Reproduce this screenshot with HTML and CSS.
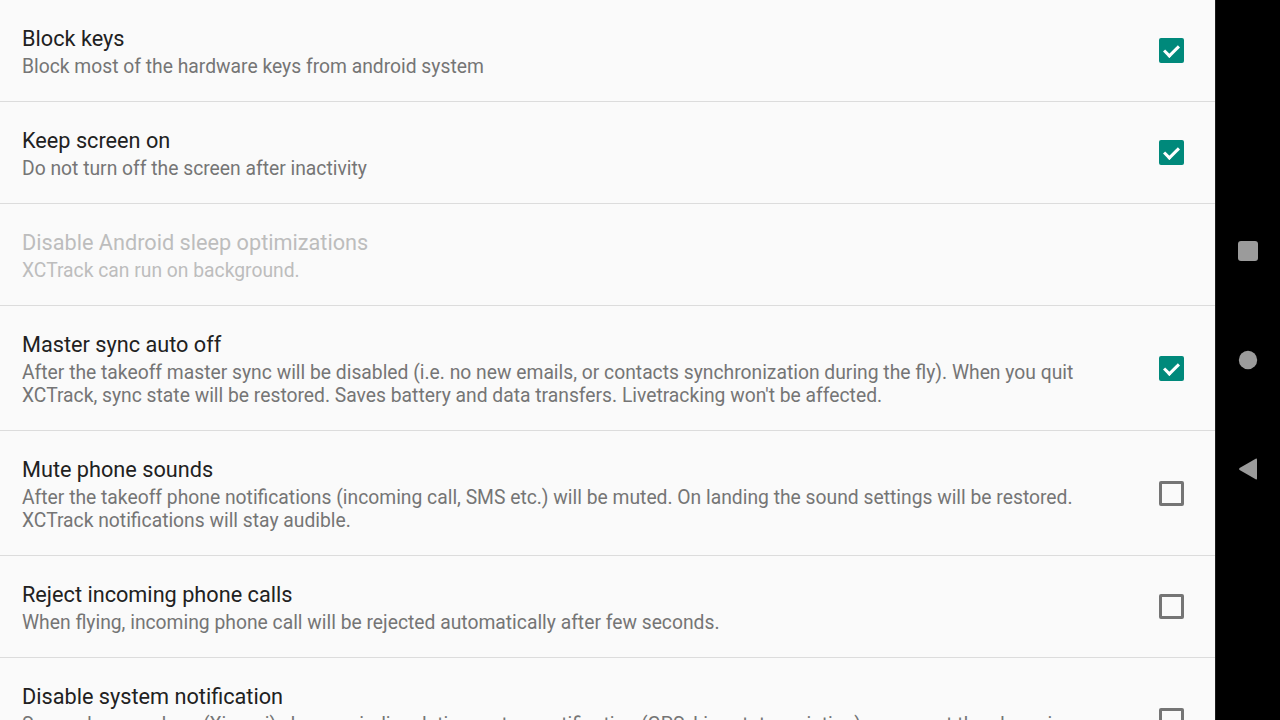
FILE: index.html
```html
<!DOCTYPE html>
<html lang="en">
<head>
  <meta charset="UTF-8">
  <meta name="viewport" content="width=device-width, initial-scale=1.0">
  <title>Settings</title>
  <link rel="stylesheet" href="styles.css">
</head>
<body>

  <div class="screen">
    <div class="prefs">

      <div class="pref">
        <div class="pref-text">
          <div class="pref-title">Block keys</div>
          <div class="pref-summary">Block most of the hardware keys from android system</div>
        </div>
        <div class="pref-widget"><span class="check checked"></span></div>
      </div>

      <div class="pref">
        <div class="pref-text">
          <div class="pref-title">Keep screen on</div>
          <div class="pref-summary">Do not turn off the screen after inactivity</div>
        </div>
        <div class="pref-widget"><span class="check checked"></span></div>
      </div>

      <div class="pref disabled">
        <div class="pref-text">
          <div class="pref-title">Disable Android sleep optimizations</div>
          <div class="pref-summary">XCTrack can run on background.</div>
        </div>
        <div class="pref-widget"></div>
      </div>

      <div class="pref">
        <div class="pref-text">
          <div class="pref-title">Master sync auto off</div>
          <div class="pref-summary">After the takeoff master sync will be disabled (i.e. no new emails, or contacts synchronization during the fly). When you quit XCTrack, sync state will be restored. Saves battery and data transfers. Livetracking won't be affected.</div>
        </div>
        <div class="pref-widget"><span class="check checked"></span></div>
      </div>

      <div class="pref">
        <div class="pref-text">
          <div class="pref-title">Mute phone sounds</div>
          <div class="pref-summary">After the takeoff phone notifications (incoming call, SMS etc.) will be muted. On landing the sound settings will be restored. XCTrack notifications will stay audible.</div>
        </div>
        <div class="pref-widget"><span class="check"></span></div>
      </div>

      <div class="pref">
        <div class="pref-text">
          <div class="pref-title">Reject incoming phone calls</div>
          <div class="pref-summary">When flying, incoming phone call will be rejected automatically after few seconds.</div>
        </div>
        <div class="pref-widget"><span class="check"></span></div>
      </div>

      <div class="pref">
        <div class="pref-text">
          <div class="pref-title">Disable system notification</div>
          <div class="pref-summary">Some phone makers (Xiaomi) show periodic relative system notification (GPS, Live state variation), so we put the phone in silent mode.</div>
        </div>
        <div class="pref-widget"><span class="check"></span></div>
      </div>

    </div>

    <!-- android navigation bar -->
    <div class="navbar">
      <svg class="nav-icon" width="22" height="22" viewBox="0 0 22 22">
        <rect x="1" y="1" width="20" height="20" rx="3" fill="#9b9b9b"/>
      </svg>
      <svg class="nav-icon" width="22" height="22" viewBox="0 0 22 22">
        <circle cx="11" cy="11" r="9.2" fill="#9b9b9b"/>
      </svg>
      <svg class="nav-icon" width="22" height="22" viewBox="0 0 22 22">
        <path d="M20 1.5 L20 20.5 Q20 22 18.7 21.3 L2.6 12 Q1.4 11 2.6 10 L18.7 0.7 Q20 0 20 1.5 Z" fill="#9b9b9b"/>
      </svg>
    </div>
  </div>

</body>
</html>
```

FILE: styles.css
```css
html, body {
  margin: 0;
  height: 100%;
}
body {
  font-family: Roboto, "Noto Sans", Arial, sans-serif;
  background-color: #fafafa;
  overflow: hidden;
}
.screen {
  display: flex;
  width: 1280px;
  height: 720px;
}
.prefs {
  flex: 1;
  overflow: hidden;
  background-color: #fafafa;
}
.pref {
  display: flex;
  align-items: center;
  border-bottom: 1px solid #dcdcdc;
}
.pref-text {
  flex: 1;
  padding: 26px 0 23px 22px;
}
.pref-title {
  font-size: 21.7px;
  line-height: 26px;
  color: #212121;
}
.pref-summary {
  margin-top: 3px;
  font-size: 19.3px;
  line-height: 23px;
  color: #757575;
}
.disabled .pref-title,
.disabled .pref-summary {
  color: #bdbdbd;
}
.pref-widget {
  width: 105px;
  flex-shrink: 0;
  display: flex;
  justify-content: flex-end;
  padding-right: 31px;
  box-sizing: border-box;
}
.check {
  width: 25px;
  height: 25px;
  box-sizing: border-box;
  border: 3px solid #757575;
  border-radius: 2px;
  position: relative;
}
.check.checked {
  background-color: #00897b;
  border-color: #00897b;
}
.check.checked::after {
  content: "";
  position: absolute;
  left: 5px;
  top: 1px;
  width: 6px;
  height: 12px;
  border-right: 3px solid #fff;
  border-bottom: 3px solid #fff;
  transform: rotate(45deg);
}
.navbar {
  width: 65px;
  flex-shrink: 0;
  background-color: #000;
  border-left: 1px solid #1c1c1c;
  box-sizing: border-box;
  display: flex;
  flex-direction: column;
  align-items: center;
  justify-content: center;
  gap: 87px;
  padding-right: 1px;
}
.nav-icon {
  display: block;
}
```
